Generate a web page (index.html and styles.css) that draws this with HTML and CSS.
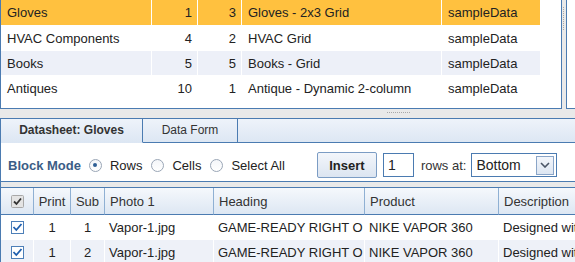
FILE: index.html
```html
<!DOCTYPE html>
<html lang="en">
<head>
  <meta charset="UTF-8" />
  <title>Datasheet</title>
  <link rel="stylesheet" href="styles.css">
</head>
<body>
  <div class="top">
    <div class="list-panel">
      <table class="list">
        <colgroup>
          <col class="l-name"><col class="l-num"><col class="l-num2"><col class="l-layout"><col class="l-src">
        </colgroup>
        <tr class="selected first">
          <td>Gloves</td><td class="num">1</td><td class="num">3</td><td>Gloves - 2x3 Grid</td><td>sampleData</td>
        </tr>
        <tr>
          <td>HVAC Components</td><td class="num">4</td><td class="num">2</td><td>HVAC Grid</td><td>sampleData</td>
        </tr>
        <tr class="alt">
          <td>Books</td><td class="num">5</td><td class="num">5</td><td>Books - Grid</td><td>sampleData</td>
        </tr>
        <tr>
          <td>Antiques</td><td class="num">10</td><td class="num">1</td><td>Antique - Dynamic 2-column</td><td>sampleData</td>
        </tr>
      </table>
    </div>
    <div class="vsplit"><div class="grip-v"></div></div>
    <div class="side-panel"></div>
  </div>

  <div class="hsplit"><div class="grip-h"></div></div>

  <div class="bottom-panel">
    <div class="tabs">
      <div class="tab active">Datasheet: Gloves</div>
      <div class="tab">Data Form</div>
      <div class="tab-fill"></div>
    </div>

    <div class="toolbar">
      <span class="mode-label">Block Mode</span>
      <label class="radio-item"><span class="radio checked"></span>Rows</label>
      <label class="radio-item"><span class="radio"></span>Cells</label>
      <label class="radio-item"><span class="radio"></span>Select All</label>
      <button class="insert-btn">Insert</button>
      <input class="count" type="text" value="1">
      <span class="rows-at">rows at:</span>
      <div class="select">
        <span>Bottom</span>
        <span class="drop">
          <svg width="10" height="6" viewBox="0 0 10 6"><path d="M1 1 L5 5 L9 1" fill="none" stroke="#4a5566" stroke-width="1.6"/></svg>
        </span>
      </div>
    </div>

    <div class="gap"></div>

    <table class="grid">
      <colgroup>
        <col class="g-chk"><col class="g-print"><col class="g-sub"><col class="g-photo"><col class="g-head"><col class="g-prod"><col class="g-desc">
      </colgroup>
      <tr class="head">
        <th class="center">
          <svg class="chk" width="13" height="13" viewBox="0 0 13 13">
            <rect x="0.5" y="0.5" width="12" height="12" rx="1" fill="#e4e4e4" stroke="#a8a8a8"/>
            <path d="M3 6.5 L5.5 9 L10 3.5" fill="none" stroke="#333" stroke-width="1.8"/>
          </svg>
        </th>
        <th class="center">Print</th>
        <th class="center">Sub</th>
        <th>Photo 1</th>
        <th>Heading</th>
        <th>Product</th>
        <th>Description</th>
      </tr>
      <tr>
        <td class="center">
          <svg class="chk" width="13" height="13" viewBox="0 0 13 13">
            <rect x="0.5" y="0.5" width="12" height="12" fill="#fff" stroke="#4d7fb8"/>
            <path d="M2.5 6 L5.3 9 L10.5 3" fill="none" stroke="#1f5fae" stroke-width="1.8"/>
          </svg>
        </td>
        <td class="center">1</td><td class="center">1</td><td>Vapor-1.jpg</td><td>GAME-READY RIGHT O</td><td>NIKE VAPOR 360</td><td>Designed wit</td>
      </tr>
      <tr class="alt">
        <td class="center">
          <svg class="chk" width="13" height="13" viewBox="0 0 13 13">
            <rect x="0.5" y="0.5" width="12" height="12" fill="#fff" stroke="#4d7fb8"/>
            <path d="M2.5 6 L5.3 9 L10.5 3" fill="none" stroke="#1f5fae" stroke-width="1.8"/>
          </svg>
        </td>
        <td class="center">1</td><td class="center">2</td><td>Vapor-1.jpg</td><td>GAME-READY RIGHT O</td><td>NIKE VAPOR 360</td><td>Designed wit</td>
      </tr>
    </table>
  </div>
</body>
</html>
```

FILE: styles.css
```css
body {
  margin: 0;
  width: 575px;
  height: 262px;
  overflow: hidden;
  background: #e9e9e9;
  color: #222;
  font-family: "Liberation Sans", Arial, sans-serif;
  font-size: 13px;
}

/* top list */
.top {
  display: flex;
  height: 109px;
}

.list-panel {
  width: 560px;
  background: #fff;
  border: 1px solid #4b7bb1;
  border-top: none;
}

.list {
  width: 540px;
  table-layout: fixed;
  border-collapse: separate;
  border-spacing: 0;
}

.l-name { width: 151px; }
.l-num { width: 46px; }
.l-num2 { width: 44px; }
.l-layout { width: 200px; }
.l-src { width: 99px; }

.list td {
  height: 24px;
  padding: 0 5px 0 6px;
  border-right: 1px solid #fff;
  border-bottom: 1px solid #fff;
  white-space: nowrap;
  overflow: hidden;
}

.list .first td {
  height: 25px;
}

.list td.num {
  text-align: right;
}

.list tr.selected td {
  background: #ffc13f;
}

.list tr.alt td {
  background: #edf0f8;
}

.vsplit {
  width: 4px;
}

.grip-v {
  margin: 7px 0 0 1px;
  height: 23px;
  border-left: 1px dotted #a9a9a9;
}

.side-panel {
  flex: 1;
  background: #fff;
  border-left: 1px solid #4b7bb1;
  border-bottom: 1px solid #4b7bb1;
}

.hsplit {
  height: 6px;
}

.grip-h {
  margin: 3px 0 0 387px;
  width: 23px;
  border-top: 1px dotted #a9a9a9;
}

/* bottom panel */
.bottom-panel {
  width: 700px;
  border-top: 1px solid #4b7bb1;
  border-left: 1px solid #4b7bb1;
}

.tabs {
  display: flex;
  height: 24px;
  background: linear-gradient(#eef3fa, #dce6f3);
}

.tab {
  line-height: 23px;
  text-align: center;
  font-size: 12px;
  color: #333;
  border-right: 1px solid #4b7bb1;
  border-bottom: 1px solid #4b7bb1;
}

.tab:first-child {
  width: 141px;
}

.tab:nth-child(2) {
  width: 94px;
}

.tab.active {
  font-weight: bold;
  border-bottom-color: transparent;
}

.tab-fill {
  flex: 1;
  border-bottom: 1px solid #4b7bb1;
}

.toolbar {
  display: flex;
  align-items: center;
  height: 32px;
  padding: 6px 0 0 7px;
  background: #fff;
  border-bottom: 1px solid #4b7bb1;
}

.mode-label {
  font-weight: bold;
  color: #3b5d86;
}

.radio-item {
  display: flex;
  align-items: center;
  margin-left: 8px;
  color: #222;
}

.radio-item + .radio-item {
  margin-left: 9px;
}

.radio {
  width: 11px;
  height: 11px;
  margin-right: 8px;
  border: 1px solid #9aa6b6;
  border-radius: 50%;
  background: linear-gradient(#f4f6f9, #fff);
  display: flex;
  align-items: center;
  justify-content: center;
}

.radio.checked::after {
  content: "";
  width: 4px;
  height: 4px;
  border-radius: 50%;
  background: #2f5f95;
}

.insert-btn {
  margin-left: 32px;
  width: 60px;
  height: 26px;
  padding: 0;
  font: bold 13px "Liberation Sans", Arial, sans-serif;
  color: #222;
  border: 1px solid #7b9cc4;
  border-radius: 2px;
  background: linear-gradient(#f3f6fb, #dce5f1);
}

.count {
  margin-left: 6px;
  width: 31px;
  height: 24px;
  box-sizing: border-box;
  padding: 0 4px;
  border: 1px solid #4b7bb1;
  font: 14px "Liberation Sans", Arial, sans-serif;
  color: #222;
}

.rows-at {
  margin-left: 7px;
  color: #333;
}

.select {
  display: flex;
  align-items: center;
  justify-content: space-between;
  margin-left: 5px;
  width: 86px;
  height: 24px;
  box-sizing: border-box;
  padding: 0 2px 0 4px;
  border: 1px solid #4b7bb1;
  font-size: 14px;
  background: #fff;
}

.drop {
  display: flex;
  align-items: center;
  justify-content: center;
  width: 16px;
  height: 17px;
  border: 1px solid #8aa5c8;
  background: linear-gradient(#f3f6fb, #dde6f2);
}

.gap {
  height: 5px;
}

/* data grid */
.grid {
  width: 699px;
  table-layout: fixed;
  border-collapse: separate;
  border-spacing: 0;
  border-top: 1px solid #4b7bb1;
  background: #fff;
}

.g-chk { width: 33px; }
.g-print { width: 37px; }
.g-sub { width: 34px; }
.g-photo { width: 109px; }
.g-head { width: 151px; }
.g-prod { width: 134px; }
.g-desc { width: 201px; }

.grid th {
  height: 26px;
  padding: 0 4px 0 5px;
  text-align: left;
  font-weight: normal;
  color: #333;
  background: linear-gradient(#f5f8fc, #dde7f3);
  border-right: 1px solid #8fb0d3;
  border-bottom: 1px solid #4b7bb1;
}

.grid td {
  height: 24px;
  padding: 0 0 0 4px;
  border-right: 1px solid #fff;
  border-bottom: 1px solid #fff;
  white-space: nowrap;
  overflow: hidden;
}

.grid .center {
  text-align: center;
  padding: 0;
}

.grid tr.alt td {
  background: #eef1f8;
}

.chk {
  display: block;
  margin: 0 auto;
}
```
